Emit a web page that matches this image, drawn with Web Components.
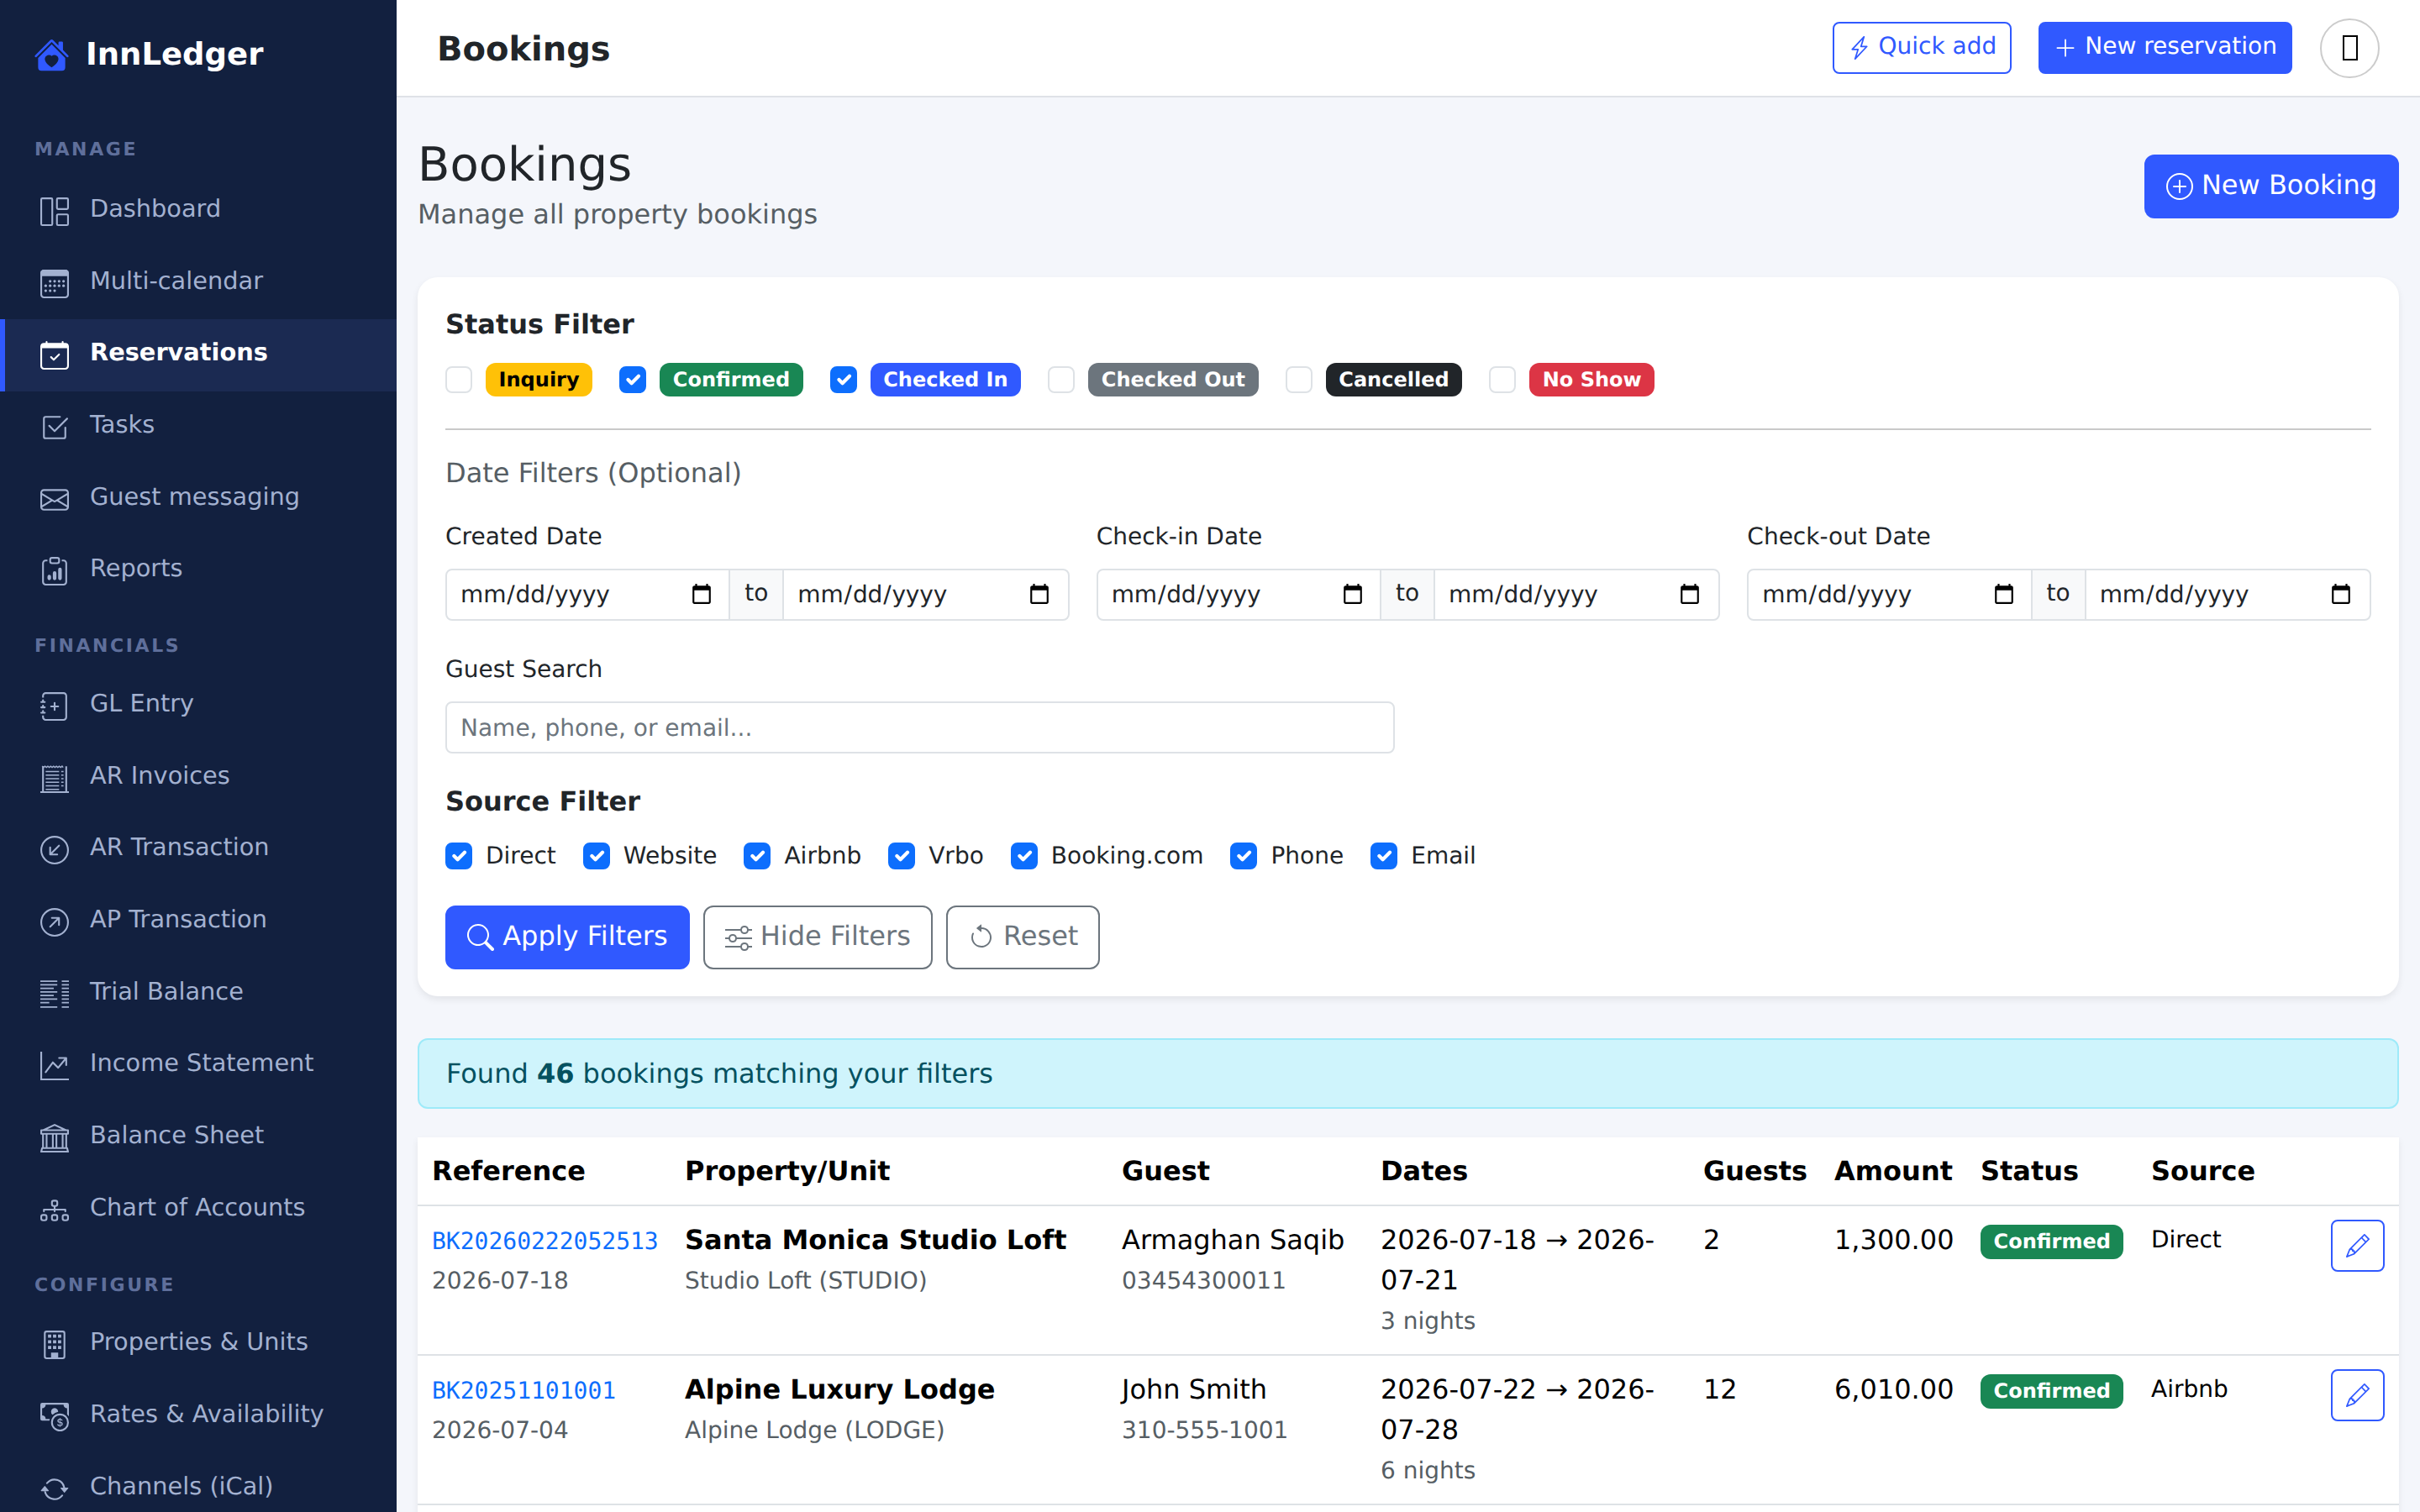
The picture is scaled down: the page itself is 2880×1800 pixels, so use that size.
<!DOCTYPE html>
<html lang="en">
<head>
<meta charset="utf-8">
<title>Bookings - InnLedger</title>
<style>
  html, body { margin: 0; height: 100%; overflow: hidden; }
  body { font-family: "DejaVu Sans", sans-serif; color: #212529; background: #f4f6fb; text-rendering: geometricPrecision; }
</style>
</head>
<body>
<app-shell>
  <side-nav slot="side">
    <nav-label>MANAGE</nav-label>
    <nav-item icon="dashboard">Dashboard</nav-item>
    <nav-item icon="calendarGrid">Multi-calendar</nav-item>
    <nav-item icon="calendarCheck" active>Reservations</nav-item>
    <nav-item icon="tasks">Tasks</nav-item>
    <nav-item icon="envelope">Guest messaging</nav-item>
    <nav-item icon="clipboard">Reports</nav-item>
    <nav-label>FINANCIALS</nav-label>
    <nav-item icon="journalPlus">GL Entry</nav-item>
    <nav-item icon="receipt">AR Invoices</nav-item>
    <nav-item icon="arrowIn">AR Transaction</nav-item>
    <nav-item icon="arrowOut">AP Transaction</nav-item>
    <nav-item icon="listColumns">Trial Balance</nav-item>
    <nav-item icon="graph">Income Statement</nav-item>
    <nav-item icon="bank">Balance Sheet</nav-item>
    <nav-item icon="diagram">Chart of Accounts</nav-item>
    <nav-label>CONFIGURE</nav-label>
    <nav-item icon="building">Properties &amp; Units</nav-item>
    <nav-item icon="cashCoin">Rates &amp; Availability</nav-item>
    <nav-item icon="repeat">Channels (iCal)</nav-item>
  </side-nav>
  <top-bar slot="top" heading="Bookings"></top-bar>
  <page-header heading="Bookings" sub="Manage all property bookings"></page-header>
  <filter-card></filter-card>
  <result-alert count="46"></result-alert>
  <booking-table></booking-table>
</app-shell>

<script>
const ICONS = {
  dashboard: '<g fill="none" stroke="currentColor"><rect x=".5" y=".5" width="6.2" height="15" rx=".6"/><rect x="9.3" y=".5" width="6.2" height="6" rx=".6"/><rect x="9.3" y="9.5" width="6.2" height="6" rx=".6"/></g>',
  calendarGrid: '<rect x=".5" y=".5" width="15" height="15" rx="1.5" fill="none" stroke="currentColor"/><path d="M0 2a2 2 0 0 1 2-2h12a2 2 0 0 1 2 2v1.6H0z"/><g><circle cx="5.5" cy="6.5" r=".75"/><circle cx="8" cy="6.5" r=".75"/><circle cx="10.5" cy="6.5" r=".75"/><circle cx="13" cy="6.5" r=".75"/><circle cx="3" cy="9" r=".75"/><circle cx="5.5" cy="9" r=".75"/><circle cx="8" cy="9" r=".75"/><circle cx="10.5" cy="9" r=".75"/><circle cx="13" cy="9" r=".75"/><circle cx="3" cy="11.8" r=".75"/><circle cx="5.5" cy="11.8" r=".75"/><circle cx="8" cy="11.8" r=".75"/></g>',
  calendarCheck: '<path d="M10.854 7.146a.5.5 0 0 1 0 .708l-3 3a.5.5 0 0 1-.708 0l-1.5-1.5a.5.5 0 1 1 .708-.708L7.5 9.793l2.646-2.647a.5.5 0 0 1 .708 0z"/><path d="M3.5 0a.5.5 0 0 1 .5.5V1h8V.5a.5.5 0 0 1 1 0V1h1a2 2 0 0 1 2 2v11a2 2 0 0 1-2 2H2a2 2 0 0 1-2-2V3a2 2 0 0 1 2-2h1V.5a.5.5 0 0 1 .5-.5zM1 4v10a1 1 0 0 0 1 1h12a1 1 0 0 0 1-1V4H1z"/>',
  tasks: '<path d="M3 14.5A1.5 1.5 0 0 1 1.5 13V3A1.5 1.5 0 0 1 3 1.5h8a.5.5 0 0 1 0 1H3a.5.5 0 0 0-.5.5v10a.5.5 0 0 0 .5.5h10a.5.5 0 0 0 .5-.5V8a.5.5 0 0 1 1 0v5a1.5 1.5 0 0 1-1.5 1.5H3z"/><path d="m8.354 10.354 7-7a.5.5 0 0 0-.708-.708L8 9.293 5.354 6.646a.5.5 0 1 0-.708.708l3 3a.5.5 0 0 0 .708 0z"/>',
  envelope: '<path d="M0 4a2 2 0 0 1 2-2h12a2 2 0 0 1 2 2v8a2 2 0 0 1-2 2H2a2 2 0 0 1-2-2V4Zm2-1a1 1 0 0 0-1 1v.217l7 4.2 7-4.2V4a1 1 0 0 0-1-1H2Zm13 2.383-4.708 2.825L15 11.105V5.383Zm-.034 6.876-5.64-3.471L8 9.583l-1.326-.795-5.64 3.47A1 1 0 0 0 2 13h12a1 1 0 0 0 .966-.741ZM1 11.105l4.708-2.897L1 5.383v5.722Z"/>',
  clipboard: '<path d="M4 11a1 1 0 1 1 2 0v1a1 1 0 1 1-2 0v-1zm6-4a1 1 0 1 1 2 0v5a1 1 0 1 1-2 0V7zM7 9a1 1 0 0 1 2 0v3a1 1 0 1 1-2 0V9z"/><path d="M4 1.5H3a2 2 0 0 0-2 2V14a2 2 0 0 0 2 2h10a2 2 0 0 0 2-2V3.5a2 2 0 0 0-2-2h-1v1h1a1 1 0 0 1 1 1V14a1 1 0 0 1-1 1H3a1 1 0 0 1-1-1V3.5a1 1 0 0 1 1-1h1v-1z"/><path d="M9.5 1a.5.5 0 0 1 .5.5v1a.5.5 0 0 1-.5.5h-3a.5.5 0 0 1-.5-.5v-1a.5.5 0 0 1 .5-.5h3zm-3-1A1.5 1.5 0 0 0 5 1.5v1A1.5 1.5 0 0 0 6.5 4h3A1.5 1.5 0 0 0 11 2.5v-1A1.5 1.5 0 0 0 9.5 0h-3z"/>',
  journalPlus: '<path d="M8 5.5a.5.5 0 0 1 .5.5v1.5H10a.5.5 0 0 1 0 1H8.5V10a.5.5 0 0 1-1 0V8.5H6a.5.5 0 0 1 0-1h1.5V6a.5.5 0 0 1 .5-.5z"/><path d="M3 0h10a2 2 0 0 1 2 2v12a2 2 0 0 1-2 2H3a2 2 0 0 1-2-2v-1h1v1a1 1 0 0 0 1 1h10a1 1 0 0 0 1-1V2a1 1 0 0 0-1-1H3a1 1 0 0 0-1 1v1H1V2a2 2 0 0 1 2-2z"/><path d="M1 5v-.5a.5.5 0 0 1 1 0V5h.5a.5.5 0 0 1 0 1h-2a.5.5 0 0 1 0-1H1zm0 3v-.5a.5.5 0 0 1 1 0V8h.5a.5.5 0 0 1 0 1h-2a.5.5 0 0 1 0-1H1zm0 3v-.5a.5.5 0 0 1 1 0v.5h.5a.5.5 0 0 1 0 1h-2a.5.5 0 0 1 0-1H1z"/>',
  receipt: '<path fill="none" stroke="currentColor" stroke-width=".7" d="M1 1l.8.7.8-.7.8.7.8-.7.8.7.8-.7.8.7.8-.7.8.7.8-.7.8.7.8-.7.8.7.8-.7.6.7"/><path fill="none" stroke="currentColor" d="M1.5 1v14.5M14.5 1v14.5M0 15.5h16"/><path fill="none" stroke="currentColor" stroke-width=".8" d="M3 4h7.5M3 6h7.5M3 8h7.5M3 10h7.5M3 12h7.5M3 14h7.5M11.7 4h1.3M11.7 6h1.3M11.7 8h1.3M11.7 10h1.3M11.7 12h1.3"/>',
  arrowIn: '<path d="M1 8a7 7 0 1 0 14 0A7 7 0 0 0 1 8zm15 0A8 8 0 1 1 0 8a8 8 0 0 1 16 0zm-5.904-2.854a.5.5 0 1 1 .707.708L6.707 9.95h2.768a.5.5 0 1 1 0 1H5.5a.5.5 0 0 1-.5-.5V6.475a.5.5 0 1 1 1 0v2.768l4.096-4.097z"/>',
  arrowOut: '<path d="M1 8a7 7 0 1 0 14 0A7 7 0 0 0 1 8zm15 0A8 8 0 1 1 0 8a8 8 0 0 1 16 0zM5.854 10.803a.5.5 0 1 1-.708-.707L9.243 6H6.475a.5.5 0 1 1 0-1h3.975a.5.5 0 0 1 .5.5v3.975a.5.5 0 1 1-1 0V6.707l-4.096 4.096z"/>',
  listColumns: '<path fill="none" stroke="currentColor" stroke-width=".8" d="M0 .5h9.5M0 2.5h9.5M0 4.5h7.5M0 6.5h9.5M0 8.5h7.5M0 10.5h9.5M0 12.5h5M0 15h9.5M12 .5h4M12 2.5h4M12 4.5h4M12 6.5h4M12 8.5h4M12 10.5h4M12 12.5h4M12 15h4"/>',
  graph: '<path fill-rule="evenodd" d="M0 0h1v15h15v1H0V0Zm10 3.5a.5.5 0 0 1 .5-.5h4a.5.5 0 0 1 .5.5v4a.5.5 0 0 1-1 0V4.9l-3.613 4.417a.5.5 0 0 1-.74.037L7.06 6.767l-3.656 5.027a.5.5 0 0 1-.808-.588l4-5.5a.5.5 0 0 1 .758-.06l2.609 2.61L13.445 4H10.5a.5.5 0 0 1-.5-.5Z"/>',
  bank: '<path d="m8 0 6.61 3h.89a.5.5 0 0 1 .5.5v2a.5.5 0 0 1-.5.5H15v7a.5.5 0 0 1 .485.38l.5 2a.498.498 0 0 1-.485.62H.5a.498.498 0 0 1-.485-.62l.5-2A.501.501 0 0 1 1 13V6H.5a.5.5 0 0 1-.5-.5v-2A.5.5 0 0 1 .5 3h.89L8 0ZM3.777 3h8.447L8 1 3.777 3ZM2 6v7h1V6H2Zm2 0v7h2.5V6H4Zm3.5 0v7h1V6h-1Zm2 0v7H12V6H9.5ZM13 6v7h1V6h-1Zm2-1V4H1v1h14Zm-.39 9H1.39l-.25 1h13.72l-.25-1Z"/>',
  diagram: '<path fill-rule="evenodd" d="M6 3.5A1.5 1.5 0 0 1 7.5 2h1A1.5 1.5 0 0 1 10 3.5v1A1.5 1.5 0 0 1 8.5 6v1H14a.5.5 0 0 1 .5.5v1a.5.5 0 0 1-1 0V8h-5v.5a.5.5 0 0 1-1 0V8h-5v.5a.5.5 0 0 1-1 0v-1A.5.5 0 0 1 2 7h5.5V6A1.5 1.5 0 0 1 6 4.5v-1zM8.5 5a.5.5 0 0 0 .5-.5v-1a.5.5 0 0 0-.5-.5h-1a.5.5 0 0 0-.5.5v1a.5.5 0 0 0 .5.5h1zM0 11.5A1.5 1.5 0 0 1 1.5 10h1A1.5 1.5 0 0 1 4 11.5v1A1.5 1.5 0 0 1 2.5 14h-1A1.5 1.5 0 0 1 0 12.5v-1zm1.5-.5a.5.5 0 0 0-.5.5v1a.5.5 0 0 0 .5.5h1a.5.5 0 0 0 .5-.5v-1a.5.5 0 0 0-.5-.5h-1zm4.5.5A1.5 1.5 0 0 1 7.5 10h1a1.5 1.5 0 0 1 1.5 1.5v1A1.5 1.5 0 0 1 8.5 14h-1A1.5 1.5 0 0 1 6 12.5v-1zm1.5-.5a.5.5 0 0 0-.5.5v1a.5.5 0 0 0 .5.5h1a.5.5 0 0 0 .5-.5v-1a.5.5 0 0 0-.5-.5h-1zm4.5.5a1.5 1.5 0 0 1 1.5-1.5h1a1.5 1.5 0 0 1 1.5 1.5v1a1.5 1.5 0 0 1-1.5 1.5h-1a1.5 1.5 0 0 1-1.5-1.5v-1zm1.5-.5a.5.5 0 0 0-.5.5v1a.5.5 0 0 0 .5.5h1a.5.5 0 0 0 .5-.5v-1a.5.5 0 0 0-.5-.5h-1z"/>',
  building: '<rect x="2.5" y=".5" width="11" height="15" rx="1" fill="none" stroke="currentColor"/><path d="M4.3 2.2h1.8V4H4.3zM7.1 2.2h1.8V4H7.1zM9.9 2.2h1.8V4H9.9zM4.3 5.4h1.8v1.8H4.3zM7.1 5.4h1.8v1.8H7.1zM9.9 5.4h1.8v1.8H9.9zM4.3 8.6h1.8v1.8H4.3zM7.1 8.6h1.8v1.8H7.1zM9.9 8.6h1.8v1.8H9.9zM6 12.3h4V16H6z"/>',
  cashCoin: '<path fill-rule="evenodd" d="M11 15a4 4 0 1 0 0-8 4 4 0 0 0 0 8zm5-4a5 5 0 1 1-10 0 5 5 0 0 1 10 0z"/><path d="M9.438 11.944c.047.596.518 1.06 1.363 1.116v.44h.375v-.443c.875-.061 1.386-.529 1.386-1.207 0-.618-.39-.936-1.09-1.1l-.296-.07v-1.2c.376.043.614.248.671.532h.658c-.047-.575-.54-1.024-1.329-1.073V8.5h-.375v.45c-.747.073-1.255.522-1.255 1.158 0 .562.378.92 1.007 1.066l.248.061v1.272c-.384-.058-.639-.27-.696-.563h-.668zm1.36-1.354c-.369-.085-.569-.26-.569-.522 0-.294.216-.514.572-.578v1.1h-.003zm.432.746c.449.104.655.272.655.569 0 .339-.257.571-.709.635v-1.224l.054.02z"/><path d="M1 0a1 1 0 0 0-1 1v8a1 1 0 0 0 1 1h4.083c.058-.344.145-.678.258-1H3a2 2 0 0 0-2-2V3a2 2 0 0 0 2-2h10a2 2 0 0 0 2 2v3.528c.38.34.717.728 1 1.154V1a1 1 0 0 0-1-1H1z"/><path d="M9.998 5.083 10 5a2 2 0 1 0-3.132 1.65 5.982 5.982 0 0 1 3.13-1.567z"/>',
  repeat: '<path d="M11.534 7h3.932a.25.25 0 0 1 .192.41l-1.966 2.36a.25.25 0 0 1-.384 0l-1.966-2.36a.25.25 0 0 1 .192-.41zm-11 2h3.932a.25.25 0 0 0 .192-.41L2.692 6.23a.25.25 0 0 0-.384 0L.342 8.59A.25.25 0 0 0 .534 9z"/><path fill-rule="evenodd" d="M8 3c-1.552 0-2.94.707-3.857 1.818a.5.5 0 1 1-.771-.636A6.002 6.002 0 0 1 13.917 7H12.9A5.002 5.002 0 0 0 8 3zM3.1 9a5.002 5.002 0 0 0 8.757 2.182.5.5 0 1 1 .771.636A6.002 6.002 0 0 1 2.083 9H3.1z"/>',
  house: '<path d="M7.293 1.5a1 1 0 0 1 1.414 0L11 3.793V2.5a.5.5 0 0 1 .5-.5h1a.5.5 0 0 1 .5.5v3.293l2.354 2.353a.5.5 0 0 1-.708.708L8 2.207 1.354 8.854a.5.5 0 1 1-.708-.708L7.293 1.5Z"/><path fill-rule="evenodd" d="m14 9.293-6-6-6 6V13.5A1.5 1.5 0 0 0 3.5 15h9a1.5 1.5 0 0 0 1.5-1.5V9.293Zm-6-.811c1.664-1.673 5.825 1.254 0 5.018-5.825-3.764-1.664-6.691 0-5.018Z"/>',
  bolt: '<path d="M11.251.068a.5.5 0 0 1 .227.58L9.677 6.5H13a.5.5 0 0 1 .364.843l-8 8.5a.5.5 0 0 1-.842-.49L6.323 9.5H3a.5.5 0 0 1-.364-.843l8-8.5a.5.5 0 0 1 .615-.09zM4.157 8.5H7a.5.5 0 0 1 .478.647L6.11 13.59l5.732-6.09H9a.5.5 0 0 1-.478-.647L9.89 2.41 4.157 8.5z"/>',
  plus: '<path d="M8 2a.5.5 0 0 1 .5.5v5h5a.5.5 0 0 1 0 1h-5v5a.5.5 0 0 1-1 0v-5h-5a.5.5 0 0 1 0-1h5v-5A.5.5 0 0 1 8 2Z"/>',
  plusCircle: '<path d="M8 15A7 7 0 1 1 8 1a7 7 0 0 1 0 14zm0 1A8 8 0 1 0 8 0a8 8 0 0 0 0 16z"/><path d="M8 4a.5.5 0 0 1 .5.5v3h3a.5.5 0 0 1 0 1h-3v3a.5.5 0 0 1-1 0v-3h-3a.5.5 0 0 1 0-1h3v-3A.5.5 0 0 1 8 4z"/>',
  search: '<path d="M11.742 10.344a6.5 6.5 0 1 0-1.397 1.398h-.001c.03.04.062.078.098.115l3.85 3.85a1 1 0 0 0 1.415-1.414l-3.85-3.85a1.007 1.007 0 0 0-.115-.1zM12 6.5a5.5 5.5 0 1 1-11 0 5.5 5.5 0 0 1 11 0z"/>',
  sliders: '<path fill-rule="evenodd" d="M11.5 2a1.5 1.5 0 1 0 0 3 1.5 1.5 0 0 0 0-3zM9.05 3a2.5 2.5 0 0 1 4.9 0H16v1h-2.05a2.5 2.5 0 0 1-4.9 0H0V3h9.05zM4.5 7a1.5 1.5 0 1 0 0 3 1.5 1.5 0 0 0 0-3zM2.05 8a2.5 2.5 0 0 1 4.9 0H16v1H6.95a2.5 2.5 0 0 1-4.9 0H0V8h2.05zm9.45 4a1.5 1.5 0 1 0 0 3 1.5 1.5 0 0 0 0-3zm-2.45 1a2.5 2.5 0 0 1 4.9 0H16v1h-2.05a2.5 2.5 0 0 1-4.9 0H0v-1h9.05z"/>',
  reset: '<path fill-rule="evenodd" d="M8 3a5 5 0 1 1-4.546 2.914.5.5 0 0 0-.908-.417A6 6 0 1 0 8 2v1z"/><path d="M8 4.466V.534a.25.25 0 0 0-.41-.192L5.23 2.308a.25.25 0 0 0 0 .384l2.36 1.966A.25.25 0 0 0 8 4.466z"/>',
  pencil: '<path d="M12.146.146a.5.5 0 0 1 .708 0l3 3a.5.5 0 0 1 0 .708l-10 10a.5.5 0 0 1-.168.11l-5 2a.5.5 0 0 1-.65-.65l2-5a.5.5 0 0 1 .11-.168l10-10zM11.207 2.5 13.5 4.793 14.793 3.5 12.5 1.207 11.207 2.5zm1.586 3L10.5 3.207 4 9.707V10h.5a.5.5 0 0 1 .5.5v.5h.5a.5.5 0 0 1 .5.5v.5h.293l6.5-6.5zm-9.761 5.175-.106.106-1.528 3.821 3.821-1.528.106-.106A.5.5 0 0 1 5 12.5V12h-.5a.5.5 0 0 1-.5-.5V11h-.5a.5.5 0 0 1-.468-.325z"/>'
};

const icon = (name, size) =>
  `<svg xmlns="http://www.w3.org/2000/svg" width="${size}" height="${size}" viewBox="0 0 16 16" fill="currentColor" aria-hidden="true">${ICONS[name]}</svg>`;

// small helper so every element below stays a couple of lines
const define = (tag, css, html) => {
  customElements.define(tag, class extends HTMLElement {
    constructor () {
      super();
      this.attachShadow({ mode: 'open' });
    }
    connectedCallback() {
      const body = typeof html === 'function' ? html(this) : html;
      this.shadowRoot.innerHTML = `<style>${css}</style>${body}`;
    }
  });
};

define('app-shell', `
  :host { display: flex; height: 100vh; overflow: hidden; }
  .col { flex: 1; min-width: 0; display: flex; flex-direction: column; }
  main { flex: 1; overflow: hidden; padding: 48px 25px 0 25px; }
`, `
  <slot name="side"></slot>
  <div class="col">
    <slot name="top"></slot>
    <main><slot></slot></main>
  </div>
`);

define('side-nav', `
  :host { display: block; flex: none; width: 472px; height: 100%; overflow: hidden; background: #12203f; }
  .brand { display: flex; align-items: center; gap: 19px; height: 114px; padding: 16px 0 0 40px; box-sizing: border-box; color: #fff; font-size: 37px; font-weight: 700; }
  .brand svg { color: #3059ff; flex: none; }
  .brand span { position: relative; top: -1px; }
`, () => `
  <div class="brand">${icon('house', 43)}<span>InnLedger</span></div>
  <slot></slot>
`);

define('nav-label', `
  :host { display: block; height: 26px; line-height: 26px; margin: 34px 0 15px; padding-left: 41px; font-size: 22px; font-weight: 700; letter-spacing: 2.6px; color: #5f6f9b; }
  :host(:first-of-type) { margin: 52px 0 17px; }
`, `<slot></slot>`);

define('nav-item', `
  :host { display: flex; align-items: center; height: 85.7px; box-sizing: border-box; padding-left: 48px; border-left: 0 solid #3059ff; color: #a3b1d0; font-size: 28.8px; line-height: 42px; }
  :host([active]) { padding-left: 42px; border-left-width: 6px; background: #1b2a52; color: #fff; font-weight: 700; }
  svg { flex: none; margin-right: 25px; }
  span { position: relative; top: -4px; }
`, (el) => `${icon(el.getAttribute('icon'), 34)}<span><slot></slot></span>`);

define('top-bar', `
  :host { display: flex; align-items: center; flex: none; height: 116px; box-sizing: border-box; padding: 0 48px; background: #fff; border-bottom: 2px solid #dfe2e7; }
  h1 { margin: 0 auto 0 0; font-size: 40px; font-weight: 700; line-height: 48px; color: #212529; position: relative; top: 2px; }
  .actions { display: flex; align-items: center; gap: 32px; }
  .avatar { display: flex; align-items: center; justify-content: center; width: 71px; height: 71px; margin-left: 1px; box-sizing: border-box; border: 2px solid #ccc; border-radius: 50%; }
  .tofu { width: 18px; height: 30px; box-sizing: border-box; border: 2px solid #000; }
`, (el) => `
  <h1>${el.getAttribute('heading')}</h1>
  <div class="actions">
    <ui-button variant="outline-primary" size="sm" icon="bolt">Quick add</ui-button>
    <ui-button variant="primary" size="sm" icon="plus">New reservation</ui-button>
    <div class="avatar"><div class="tofu"></div></div>
  </div>
`);

define('ui-button', `
  :host { display: inline-block; flex: none; font-size: 32px; line-height: 48px; }
  :host([size="sm"]) { font-size: 28px; line-height: 42px; }
  button { display: inline-flex; align-items: center; font: inherit; line-height: inherit; padding: 12px 24px; border: 2px solid transparent; border-radius: 12px; background: none; cursor: pointer; white-space: nowrap; text-rendering: inherit; }
  :host([size="sm"]) button { min-height: 62px; padding: 8px 16px; border-radius: 8px; }
  .label { position: relative; top: -2px; }
  .primary { background: #3059ff; border-color: #3059ff; color: #fff; }
  .outline-primary { background: #fff; border-color: #3059ff; color: #3059ff; }
  .outline-secondary { background: #fff; border-color: #6c757d; color: #6c757d; }
  svg { flex: none; }
  .label:not(:empty) { margin-left: .318em; }
`, (el) => {
  const size = el.getAttribute('size') === 'sm' ? 28 : 32;
  const text = el.textContent.trim();
  return `<button class="${el.getAttribute('variant')}">${icon(el.getAttribute('icon'), size)}<span class="label">${text}</span></button>`;
});

define('page-header', `
  :host { display: flex; align-items: center; justify-content: space-between; margin-bottom: 51px; }
  h2 { margin: -1px 0 1px; font-size: 56px; font-weight: 400; line-height: 67px; color: #212529; }
  p { margin: 0; font-size: 32px; line-height: 48px; color: #565e64; }
`, (el) => `
  <div><h2>${el.getAttribute('heading')}</h2><p>${el.getAttribute('sub')}</p></div>
  <ui-button variant="primary" icon="plusCircle">New Booking</ui-button>
`);

define('status-badge', `
  :host { display: inline-block; font-size: 24px; font-weight: 700; line-height: 24px; padding: 8.4px 15.6px; border-radius: 12px; color: #fff; background: #6c757d; white-space: nowrap; }
  :host([tone="warning"]) { background: #ffc107; color: #000; }
  :host([tone="success"]) { background: #198754; }
  :host([tone="primary"]) { background: #3059ff; }
  :host([tone="dark"]) { background: #212529; }
  :host([tone="danger"]) { background: #dc3545; }
`, `<slot></slot>`);

const CHECK_SVG = "url(\"data:image/svg+xml,%3csvg xmlns='http://www.w3.org/2000/svg' viewBox='0 0 20 20'%3e%3cpath fill='none' stroke='%23fff' stroke-linecap='round' stroke-linejoin='round' stroke-width='3' d='m6 10 3 3 6-6'/%3e%3c/svg%3e\")";

define('check-box', `
  :host { display: inline-flex; align-items: center; gap: 16px; font-size: 28px; line-height: 42px; color: #212529; }
  input { appearance: none; flex: none; width: 32px; height: 32px; margin: 0; box-sizing: border-box; border: 2px solid #dee2e6; border-radius: 8px; background: #fff center / contain no-repeat; }
  input:checked { background-color: #0d6efd; border-color: #0d6efd; background-image: ${CHECK_SVG}; }
`, (el) => `<input type="checkbox" ${el.hasAttribute('checked') ? 'checked' : ''}><slot></slot>`);

define('date-range', `
  :host { display: block; min-width: 0; }
  label { display: block; font-size: 28px; line-height: 42px; margin-bottom: 17px; color: #212529; }
  .group { display: flex; height: 62px; }
  input { flex: 1; min-width: 0; box-sizing: border-box; height: 62px; margin: 0; padding: 8px 16px 8px 15px; border: 2px solid #dee2e6; background: #fff; font: 28px/42px "DejaVu Sans", sans-serif; letter-spacing: -.15px; color: #212529; text-rendering: inherit; }
  input:first-child { border-radius: 8px 0 0 8px; }
  input:last-child { padding-right: 18px; border-radius: 0 8px 8px 0; }
  .to { flex: none; width: 62px; box-sizing: border-box; border: 2px solid #dee2e6; border-width: 2px 0; background: #f8f9fa; font-size: 28px; line-height: 54px; text-align: center; color: #212529; }
`, (el) => `
  <label>${el.getAttribute('label')}</label>
  <div class="group"><input type="date"><div class="to">to</div><input type="date"></div>
`);

define('filter-card', `
  :host { display: block; box-sizing: border-box; height: 856px; padding: 36px 33px 32px; background: #fff; border-radius: 24px; box-shadow: 0 4px 8px rgba(0,0,0,.075); }
  h3 { margin: 0; font-size: 32px; font-weight: 700; line-height: 40px; color: #212529; }
  .status { display: flex; gap: 32px; margin-top: 25px; }
  .status check-box { height: 42px; }
  hr { height: 2px; margin: 37px 0 32px; border: 0; background: #c9c9c9; }
  h4 { margin: 0 0 36px; font-size: 32px; font-weight: 400; line-height: 38px; color: #565e64; }
  .dates { display: grid; grid-template-columns: repeat(3, 1fr); gap: 32px; }
  .search { margin-top: 37px; width: 1130px; }
  .search label { display: block; font-size: 28px; line-height: 42px; margin-bottom: 17px; }
  .search input { display: block; width: 100%; box-sizing: border-box; height: 62px; padding: 8px 16px; border: 2px solid #dee2e6; border-radius: 8px; font: 28px/42px "DejaVu Sans", sans-serif; text-rendering: inherit; }
  .search input::placeholder { color: #6c757d; }
  .source-title { margin-top: 37px; }
  .source { display: flex; gap: 32px; margin-top: 24px; }
  .buttons { display: flex; gap: 16px; margin-top: 38px; }
`, `
  <h3>Status Filter</h3>
  <div class="status">
    <check-box><status-badge tone="warning">Inquiry</status-badge></check-box>
    <check-box checked><status-badge tone="success">Confirmed</status-badge></check-box>
    <check-box checked><status-badge tone="primary">Checked In</status-badge></check-box>
    <check-box><status-badge>Checked Out</status-badge></check-box>
    <check-box><status-badge tone="dark">Cancelled</status-badge></check-box>
    <check-box><status-badge tone="danger">No Show</status-badge></check-box>
  </div>
  <hr>
  <h4>Date Filters (Optional)</h4>
  <div class="dates">
    <date-range label="Created Date"></date-range>
    <date-range label="Check-in Date"></date-range>
    <date-range label="Check-out Date"></date-range>
  </div>
  <div class="search">
    <label>Guest Search</label>
    <input type="text" placeholder="Name, phone, or email...">
  </div>
  <h3 class="source-title">Source Filter</h3>
  <div class="source">
    <check-box checked>Direct</check-box>
    <check-box checked>Website</check-box>
    <check-box checked>Airbnb</check-box>
    <check-box checked>Vrbo</check-box>
    <check-box checked>Booking.com</check-box>
    <check-box checked>Phone</check-box>
    <check-box checked>Email</check-box>
  </div>
  <div class="buttons">
    <ui-button variant="primary" icon="search">Apply Filters</ui-button>
    <ui-button variant="outline-secondary" icon="sliders">Hide Filters</ui-button>
    <ui-button variant="outline-secondary" icon="reset">Reset</ui-button>
  </div>
`);

define('result-alert', `
  :host { display: block; box-sizing: border-box; height: 84px; margin: 50px 0 34px; padding: 16px 32px; border: 2px solid #9eeaf9; border-radius: 12px; background: #cff4fc; color: #055160; font-size: 32px; line-height: 48px; }
  b { font-weight: 700; }
`, (el) => `Found <b>${el.getAttribute('count')}</b> bookings matching your filters`);

const BOOKINGS = [
  { ref: 'BK20260222052513', created: '2026-07-18', prop: 'Santa Monica Studio Loft', unit: 'Studio Loft (STUDIO)', guest: 'Armaghan Saqib', phone: '03454300011', dates: '2026-07-18 → 2026-07-21', nights: '3 nights', guests: 2, amount: '1,300.00', source: 'Direct' },
  { ref: 'BK20251101001', created: '2026-07-04', prop: 'Alpine Luxury Lodge', unit: 'Alpine Lodge (LODGE)', guest: 'John Smith', phone: '310-555-1001', dates: '2026-07-22 → 2026-07-28', nights: '6 nights', guests: 12, amount: '6,010.00', source: 'Airbnb' }
];

define('booking-table', `
  :host { display: block; padding-bottom: 60px; background: #fff; box-shadow: 0 4px 8px rgba(0,0,0,.075); color: #000; font-size: 32px; line-height: 48px; }
  table { width: 100%; border-collapse: collapse; table-layout: fixed; }
  th { padding: 16px 16px 16px 17px; text-align: left; font-weight: 700; border-bottom: 2px solid #dee2e6; }
  td { padding: 16px 16px 20px 17px; vertical-align: top; border-bottom: 2px solid #dee2e6; }
  a { color: #0d6efd; text-decoration: none; font: 28px "DejaVu Sans Mono", monospace; }
  .small { font-size: 28px; line-height: 42px; color: #565e64; }
  .sub { margin-top: 4px; margin-bottom: -4px; }
  .nights { margin-top: 4px; margin-bottom: -2px; }
  .plain { padding-top: 3px; margin-bottom: -3px; font-size: 28px; line-height: 42px; }
  td.act { padding-right: 17px; padding-left: 0; text-align: right; }
  .badge { display: block; margin-top: 6px; line-height: 0; }
`, () => `
  <table>
    <colgroup><col style="width:301px"><col style="width:520px"><col style="width:308px"><col style="width:384px"><col style="width:156px"><col style="width:174px"><col style="width:203px"><col style="width:218px"><col></colgroup>
    <thead><tr><th>Reference</th><th>Property/Unit</th><th>Guest</th><th>Dates</th><th>Guests</th><th>Amount</th><th>Status</th><th>Source</th><th></th></tr></thead>
    <tbody>
      ${BOOKINGS.map(b => `<tr>
        <td><a href="#">${b.ref}</a><div class="small sub">${b.created}</div></td>
        <td><b>${b.prop}</b><div class="small sub">${b.unit}</div></td>
        <td>${b.guest}<div class="small sub">${b.phone}</div></td>
        <td>${b.dates}<div class="small nights">${b.nights}</div></td>
        <td>${b.guests}</td>
        <td>${b.amount}</td>
        <td><span class="badge"><status-badge tone="success">Confirmed</status-badge></span></td>
        <td><div class="plain">${b.source}</div></td>
        <td class="act"><ui-button variant="outline-primary" size="sm" icon="pencil"></ui-button></td>
      </tr>`).join('')}
    </tbody>
  </table>
`);
</script>
</body>
</html>
